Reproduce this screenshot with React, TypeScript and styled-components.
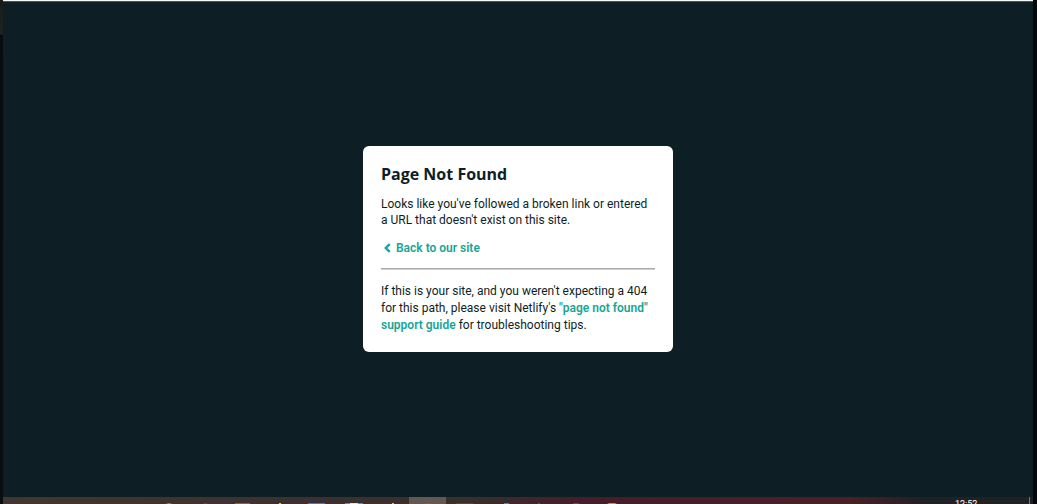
import React from "react";
import styled, { createGlobalStyle } from "styled-components";

const GlobalStyle = createGlobalStyle`
  *, *::before, *::after { box-sizing: border-box; }
  body {
    margin: 0;
    background: #0e1e25;
    color: #0e1e25;
    font-family: "Segoe UI", Roboto, sans-serif;
    font-size: 12px;
    line-height: 16px;
  }
`;

const Screen = styled.div`
  display: flex;
  min-height: 100vh;
`;

const Edge = styled.div<{ $side: "left" | "right" }>`
  flex: none;
  width: ${(p) => (p.$side === "left" ? 3 : 4)}px;
  background: ${(p) =>
    p.$side === "left"
      ? "linear-gradient(#181a19, #20241d 34px, #080b0f 35px, #0a0d12)"
      : "#04070b"};
`;

const Desktop = styled.div`
  flex: 1;
  min-width: 0;
  display: flex;
  flex-direction: column;
  border-top: 1px solid #f4f6f6;
`;

const Main = styled.main`
  flex: 1;
  display: flex;
  align-items: center;
  justify-content: center;
  padding-bottom: 1px;
  border-top: 1px solid #46555b;
`;

const Card = styled.section`
  width: 310px;
  padding: 18px;
  border-radius: 6px;
  background: #fff;
`;

const Title = styled.h1`
  margin: 0 0 12px;
  font-family: "Segoe UI", "Open Sans", sans-serif;
  font-size: 16px;
  line-height: 20px;
  font-weight: 700;
`;

const Text = styled.p<{ $loose?: boolean }>`
  margin: 0;
  white-space: nowrap;
  line-height: ${(p) => (p.$loose ? 17 : 16)}px;
`;

const Link = styled.a`
  color: #16a597;
  font-weight: 600;
  text-decoration: none;
`;

const BackLink = styled(Link)`
  display: flex;
  align-items: center;
  gap: 5px;
  margin: 12px 0;
  padding-left: 3px;
`;

const Divider = styled.hr`
  margin: 0 0 13px;
  border: 0;
  border-top: 1px solid #a9a9ac;
  border-bottom: 1px solid #d0d0d3;
`;

const Taskbar = styled.footer`
  display: flex;
  justify-content: space-between;
  height: 7px;
  overflow: hidden;
  background: linear-gradient(
    90deg,
    #40372f 0%,
    #3b302f 32%,
    #37302c 45%,
    #451e28 56%,
    #4a2028 82%,
    #212123 89%,
    #202123 100%
  );
`;

const TaskIcons = styled.svg`
  flex: none;
  display: block;
  width: 640px;
  height: 7px;
`;

const Clock = styled.time`
  flex: none;
  display: block;
  width: 75px;
  padding-top: 1px;
  margin-right: 3px;
  border-right: 1px solid #77797a;
  color: #fff;
  font-size: 9px;
  line-height: 12px;
`;

export default function App() {
  return (
    <>
      <GlobalStyle />
      <Screen>
        <Edge $side="left" />
        <Desktop>
          <Main>
            <Card>
              <Title>Page Not Found</Title>
              <Text>
                Looks like you've followed a broken link or entered
                <br />a URL that doesn't exist on this site.
              </Text>
              <BackLink href="/">
                <svg width="7" height="10" viewBox="0 0 7 10" aria-hidden="true">
                  <path d="M5.700 1.200 1.800 5l3.900 3.800" fill="none" stroke="currentColor" strokeWidth="2.400" />
                </svg>
                Back to our site
              </BackLink>
              <Divider />
              <Text $loose>
                If this is your site, and you weren't expecting a 404
                <br />
                for this path, please visit Netlify's{" "}
                <Link href="#support-guide">
                  "page not found"
                  <br />
                  support guide
                </Link>{" "}
                for troubleshooting tips.
              </Text>
            </Card>
          </Main>
          <Taskbar>
            <TaskIcons viewBox="0 0 640 7" aria-hidden="true">
              <rect x="406" width="37" height="7" fill="#625955" />
              <path d="M163 7q3-2 6 0z" fill="#8c8584" />
              <path d="M201 7l1-1 2 1z" fill="#9a5527" />
              <path d="M232 6h15v1h-15z" fill="#87662f" />
              <path d="M276 6h2v1h-2z" fill="#e6dc24" />
              <path d="M305 6h17v1h-17z" fill="#2388dc" />
              <path d="M342 6h18v1h-18z" fill="#4d91c2" />
              <path d="M347 6h8v1h-8z" fill="#d8e6e9" />
              <path d="M389 6h2v1h-2z" fill="#d8c951" />
              <path d="M421 7q4-2 8 0z" fill="#b34a3c" />
              <path d="M453 6h17v1h-17z" fill="#4b4a48" />
              <path d="M501 6h5v1h-5z" fill="#3292cd" />
              <path d="M535 6h2v1h-2z" fill="#595b4c" />
              <path d="M570 6h6v1h-6z" fill="#70464e" />
              <path d="M604 7l2-1h6l2 1z" fill="#ef8045" />
            </TaskIcons>
            <Clock>12:52</Clock>
          </Taskbar>
        </Desktop>
        <Edge $side="right" />
      </Screen>
    </>
  );
}
